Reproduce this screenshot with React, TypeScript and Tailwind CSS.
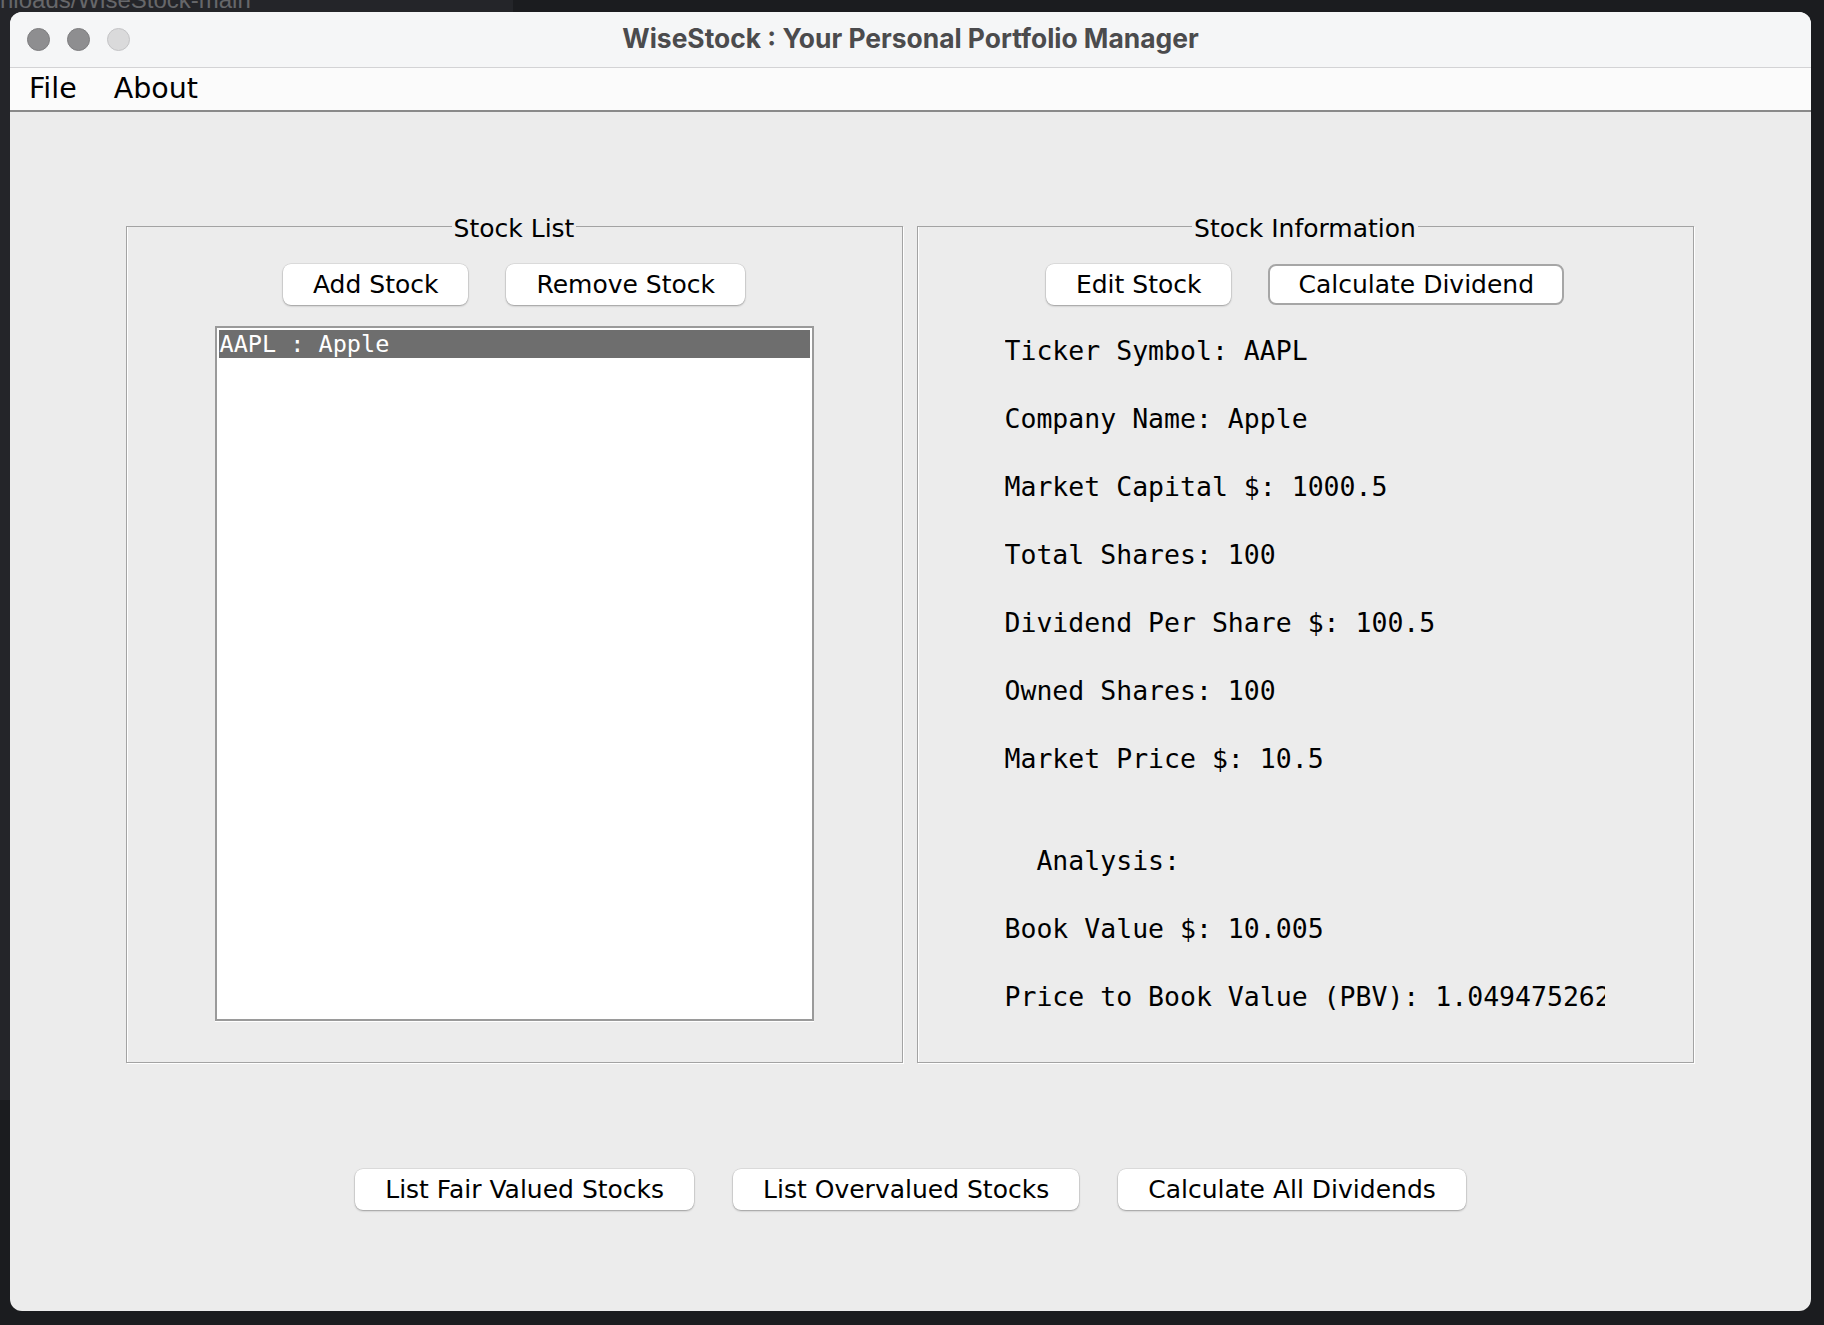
import React from "react";

const labels = [
  "Ticker Symbol: AAPL",
  "Company Name: Apple",
  "Market Capital $: 1000.5",
  "Total Shares: 100",
  "Dividend Per Share $: 100.5",
  "Owned Shares: 100",
  "Market Price $: 10.5",
];

const analysis = ["Book Value $: 10.005", "Price to Book Value (PBV): 1.0494752623688157"];

function MacButton({ label, focused }: { label: string; focused?: boolean }) {
  return (
    <button
      className={
        focused
          ? "h-[41px] px-[28px] rounded-[8px] bg-white border-2 border-[#a6a6a6] text-[25px] leading-none text-black"
          : "h-[41px] px-[30px] rounded-[8px] bg-white shadow-[0_0_0_0.5px_rgba(0,0,0,0.12),0_1px_2px_rgba(0,0,0,0.3)] text-[25px] leading-none text-black"
      }
    >
      {label}
    </button>
  );
}

function Panel({ title, children }: { title: string; children: React.ReactNode }) {
  return (
    <fieldset className="w-[777px] h-[854px] border border-[#a3a3a3] shadow-[1px_1px_0_#fff,inset_1px_0_0_#fff] flex flex-col">
      <legend className="mx-auto px-[2px] pt-[6px] text-[25px] leading-[28px] text-black">{title}</legend>
      {children}
    </fieldset>
  );
}

export default function App() {
  return (
    <div className="relative w-[1824px] h-[1325px] bg-[#1b1c1f] overflow-hidden pl-[10px] pt-[12px] font-['DejaVu_Sans','Liberation_Sans',sans-serif]">
      {/* other window behind, top-left */}
      <div className="absolute left-0 top-0 w-[513px] h-[1100px] bg-[#242529]">
        <div className="text-[#66676a] text-[24px] leading-none -mt-[12px] font-['Liberation_Sans',sans-serif]">nloads/WiseStock-main</div>
      </div>

      <div className="relative w-[1801px] h-[1299px] rounded-[12px] overflow-hidden bg-[#ececec] flex flex-col">
        {/* title bar */}
        <div className="h-[56px] shrink-0 bg-[#f5f6f7] border-b border-[#d3d3d5] grid grid-cols-[1fr_auto_1fr] items-center">
          <div className="flex items-center gap-[17px] pl-[17px]">
            <div className="w-[23px] h-[23px] rounded-full bg-[#8e8e90] border border-[#7d7d7f]" />
            <div className="w-[23px] h-[23px] rounded-full bg-[#8e8e90] border border-[#7d7d7f]" />
            <div className="w-[23px] h-[23px] rounded-full bg-[#dadadb] border border-[#c4c4c6]" />
          </div>
          <div className="font-['Inter','Roboto',sans-serif] font-bold text-[26.4px] text-[#4b4b4d] leading-none -mt-[3px]">
            WiseStock : Your Personal Portfolio Manager
          </div>
          <div />
        </div>

        {/* menu bar */}
        <div className="h-[44px] shrink-0 bg-[#fbfbfb] border-b-2 border-[#8a8a8a] flex items-center gap-[37px] pl-[19px] text-[28.5px] text-black">
          <span>File</span>
          <span>About</span>
        </div>

        {/* content */}
        <div className="flex-1 flex flex-col items-center pt-[97px]">
          <div className="flex gap-[14px] -ml-[2px]">
            <Panel title="Stock List">
              <div className="flex justify-center gap-[38px] pt-[21px]">
                <MacButton label="Add Stock" />
                <MacButton label="Remove Stock" />
              </div>
              <div className="mx-auto mt-[21px] w-[599px] h-[695px] bg-white border-2 border-[#9a9a9a] shadow-[0_1px_0_#fff] p-[2px]">
                <div className="h-[28px] bg-[#6e6e6e] text-white px-[1px] font-['DejaVu_Sans_Mono',monospace] text-[23.5px] leading-[28px] whitespace-pre">
                  AAPL : Apple
                </div>
              </div>
            </Panel>

            <Panel title="Stock Information">
              <div className="flex justify-center gap-[37px] pt-[21px]">
                <MacButton label="Edit Stock" />
                <MacButton label="Calculate Dividend" focused />
              </div>
              <div className="mt-[12px] pl-[87px] w-[687px] font-['DejaVu_Sans_Mono',monospace] text-[26.5px] leading-[68px] text-black">
                {labels.map((l) => (
                  <div key={l} className="overflow-hidden whitespace-pre">{l}</div>
                ))}
                <div className="h-[34px]" />
                <div className="overflow-hidden whitespace-pre">{"  Analysis:"}</div>
                {analysis.map((l) => (
                  <div key={l} className="overflow-hidden whitespace-pre">{l}</div>
                ))}
              </div>
            </Panel>
          </div>

          <div className="flex gap-[39px] mt-[106px]">
            <MacButton label="List Fair Valued Stocks" />
            <MacButton label="List Overvalued Stocks" />
            <MacButton label="Calculate All Dividends" />
          </div>
        </div>
      </div>
    </div>
  );
}
